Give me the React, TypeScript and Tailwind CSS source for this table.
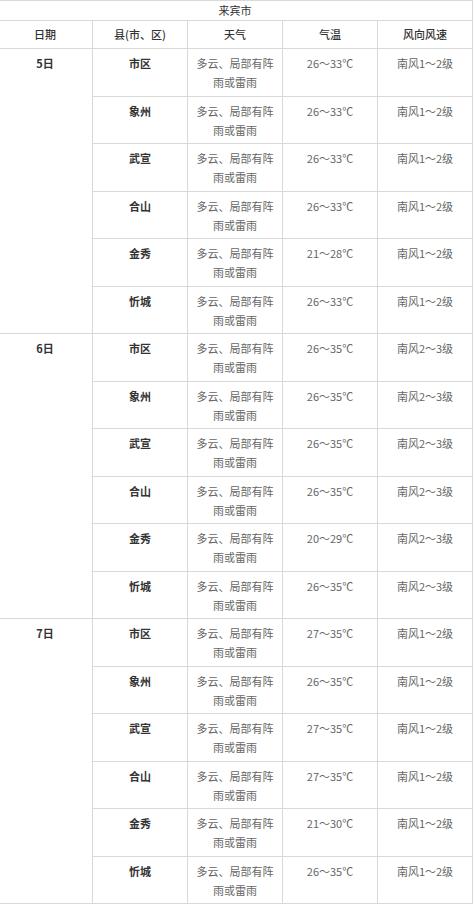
const days = [
  {
    day: '5日',
    wind: '南风1～2级',
    rows: [
      ['市区', '26～33℃'],
      ['象州', '26～33℃'],
      ['武宣', '26～33℃'],
      ['合山', '26～33℃'],
      ['金秀', '21～28℃'],
      ['忻城', '26～33℃'],
    ],
  },
  {
    day: '6日',
    wind: '南风2～3级',
    rows: [
      ['市区', '26～35℃'],
      ['象州', '26～35℃'],
      ['武宣', '26～35℃'],
      ['合山', '26～35℃'],
      ['金秀', '20～29℃'],
      ['忻城', '26～35℃'],
    ],
  },
  {
    day: '7日',
    wind: '南风1～2级',
    rows: [
      ['市区', '27～35℃'],
      ['象州', '26～35℃'],
      ['武宣', '27～35℃'],
      ['合山', '27～35℃'],
      ['金秀', '21～30℃'],
      ['忻城', '26～35℃'],
    ],
  },
]

const headers = ['日期', '县(市、区)', '天气', '气温', '风向风速']

export default function App() {
  return (
    <div className="h-[907px] w-[475px] overflow-hidden bg-white font-['Noto_Sans_CJK_SC','Noto_Sans',sans-serif] text-[11px]">
      <div className="ml-[-3px] grid w-[476px] grid-cols-[repeat(5,94px)] grid-rows-[19px_27px_repeat(18,46.5px)] gap-px border border-[#d9d9d9] bg-[#d9d9d9]">
        <div className="col-span-5 flex items-center justify-center bg-white text-[#333]">来宾市</div>
        {headers.map((h) => (
          <div key={h} className="flex items-center justify-center bg-white font-medium text-[#333]">
            {h}
          </div>
        ))}
        {days.map((d) =>
          d.rows.map(([county, temp], i) => (
            <Row key={d.day + county} day={i === 0 ? d.day : null} county={county} temp={temp} wind={d.wind} />
          )),
        )}
      </div>
    </div>
  )
}

function Row({ day, county, temp, wind }: { day: string | null; county: string; temp: string; wind: string }) {
  return (
    <>
      {day && (
        <div className="row-span-6 bg-white pt-[5px] text-center font-bold leading-[19px] text-[#333]">{day}</div>
      )}
      <div className="bg-white pt-[5px] text-center font-bold leading-[19px] text-[#333]">{county}</div>
      <div className="bg-white pt-[5px] text-center leading-[19px] text-[#666]">
        <span className="block">多云、局部有阵</span>
        <span className="block">雨或雷雨</span>
      </div>
      <div className="bg-white pt-[5px] text-center leading-[19px] text-[#666]">{temp}</div>
      <div className="bg-white pt-[5px] text-center leading-[19px] text-[#666]">{wind}</div>
    </>
  )
}
